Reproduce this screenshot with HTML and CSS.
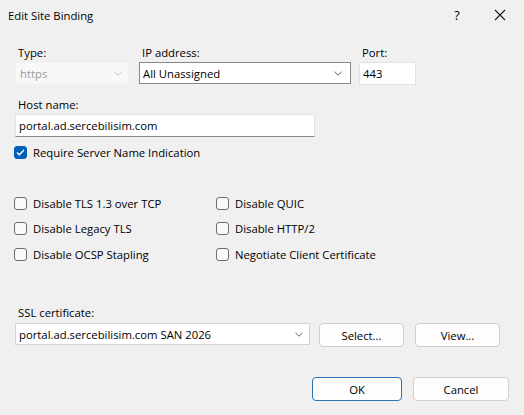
FILE: index.html
```html
<!DOCTYPE html>
<html>
<head>
    <title>Edit Site Binding</title>
    <link rel="stylesheet" href="styles.css">
</head>
<body>
    <div class="dialog">
        <div class="titlebar">
            <span class="title">Edit Site Binding</span>
            <span class="help">?</span>
            <span class="close">
                <svg width="12" height="12" viewBox="0 0 12 12"><path d="M1 1 L11 11 M11 1 L1 11" stroke="#1a1a1a" stroke-width="1.1" fill="none"/></svg>
            </span>
        </div>

        <div class="content">
            <!-- type / ip / port -->
            <div class="row fields">
                <div class="field type">
                    <label>Type:</label>
                    <div class="combo disabled">
                        <span>https</span>
                        <svg class="chev" width="8" height="5" viewBox="0 0 8 5"><path d="M0.5 0.8 L4 4.2 L7.5 0.8" stroke="#c4c4c4" fill="none"/></svg>
                    </div>
                </div>
                <div class="field ip">
                    <label>IP address:</label>
                    <div class="combo focus">
                        <span>All Unassigned</span>
                        <svg class="chev" width="8" height="5" viewBox="0 0 8 5"><path d="M0.5 0.8 L4 4.2 L7.5 0.8" stroke="#5c5c5c" fill="none"/></svg>
                    </div>
                </div>
                <div class="field port">
                    <label>Port:</label>
                    <div class="textbox">443</div>
                </div>
            </div>

            <div class="field host">
                <label>Host name:</label>
                <div class="textbox underline">portal.ad.sercebilisim.com</div>
            </div>

            <div class="check sni">
                <span class="box checked">
                    <svg width="9" height="7" viewBox="0 0 9 7"><path d="M1 3.5 L3.3 5.8 L8 1" stroke="#fff" stroke-width="1.3" fill="none"/></svg>
                </span>
                Require Server Name Indication
            </div>

            <div class="options">
                <div class="check"><span class="box"></span>Disable TLS 1.3 over TCP</div>
                <div class="check"><span class="box"></span>Disable QUIC</div>
                <div class="check"><span class="box"></span>Disable Legacy TLS</div>
                <div class="check"><span class="box"></span>Disable HTTP/2</div>
                <div class="check"><span class="box"></span>Disable OCSP Stapling</div>
                <div class="check"><span class="box"></span>Negotiate Client Certificate</div>
            </div>

            <div class="field ssl">
                <label>SSL certificate:</label>
                <div class="row">
                    <div class="combo cert">
                        <span>portal.ad.sercebilisim.com SAN 2026</span>
                        <svg class="chev" width="8" height="5" viewBox="0 0 8 5"><path d="M0.5 0.8 L4 4.2 L7.5 0.8" stroke="#5c5c5c" fill="none"/></svg>
                    </div>
                    <button class="btn select">Select...</button>
                    <button class="btn view">View...</button>
                </div>
            </div>

            <div class="buttons">
                <button class="btn ok">OK</button>
                <button class="btn cancel">Cancel</button>
            </div>
        </div>
    </div>
</body>
</html>
```

FILE: styles.css
```css
body {
    margin: 0;
    background-color: #f0f0f0;
    font-family: "Open Sans", "Noto Sans", sans-serif;
    font-size: 11.3px;
    color: #000;
}

.dialog {
    width: 524px;
    height: 415px;
}

.titlebar {
    display: flex;
    align-items: center;
    height: 30px;
    padding-left: 8px;
}
.title {
    flex: 1;
}
.help {
    width: 16px;
    text-align: center;
    margin-right: 29px;
    font-size: 12.5px;
}
.close {
    display: flex;
    width: 12px;
    margin-right: 18px;
}

.content {
    padding: 15px 0 0 15px;
}

.row {
    display: flex;
    align-items: flex-start;
}

.field label {
    display: block;
    height: 17px;
    line-height: 16px;
    padding-left: 3px;
}

.fields .field + .field {
    margin-left: 10px;
}
.fields .port {
    margin-left: 8px !important;
}

.combo, .textbox {
    display: flex;
    align-items: center;
    box-sizing: border-box;
    height: 22px;
    padding-left: 3px;
    background-color: #fff;
    border: 1px solid #e3e3e3;
}
.combo span {
    flex: 1;
    white-space: nowrap;
}
.chev {
    margin-right: 8px;
}

.type .combo {
    width: 114px;
    background-color: #f8f8f8;
    border-color: #f3f3f3;
    color: #9a9a9a;
    padding-left: 4px;
}
.type .chev {
    margin-right: 6px;
}
.ip .combo {
    width: 212px;
    border-color: #888;
}
.port .textbox {
    width: 57px;
    height: 23px;
}

.host {
    margin-top: 12px;
}
.host .textbox {
    width: 300px;
    height: 23px;
    border-bottom-color: #8a8a8a;
}

.check {
    display: flex;
    align-items: center;
    height: 16px;
    margin-left: -1px;
}
.box {
    display: flex;
    align-items: center;
    justify-content: center;
    box-sizing: border-box;
    width: 13px;
    height: 13px;
    margin-right: 6px;
    border: 1px solid #6e6e6e;
    border-radius: 3px;
    background-color: #f9f9f9;
}
.box.checked {
    background-color: #005fb8;
    border-color: #005fb8;
}

.sni {
    margin-top: 7px;
}

.options {
    display: grid;
    grid-template-columns: 202px 1fr;
    row-gap: 9.5px;
    margin-top: 35px;
}

.ssl {
    margin-top: 43px;
}
.ssl label {
    height: 18px;
}
.cert {
    width: 295px;
    border-color: #d4d4d4;
}
.cert .chev {
    margin-right: 6px;
}

.btn {
    box-sizing: border-box;
    height: 24px;
    font-family: inherit;
    font-size: 11.3px;
    color: #000;
    background-color: #fdfdfd;
    border: 1px solid #d0d0d0;
    border-radius: 4px;
    padding: 0;
}
.select {
    width: 85px;
    margin-left: 9px;
}
.view {
    width: 85px;
    margin-left: 11px;
}

.buttons {
    display: flex;
    margin-top: 30px;
    padding-left: 297px;
}
.ok {
    width: 90px;
    border-color: #2a72b5;
}
.cancel {
    width: 96px;
    margin-left: 11px;
}
```
